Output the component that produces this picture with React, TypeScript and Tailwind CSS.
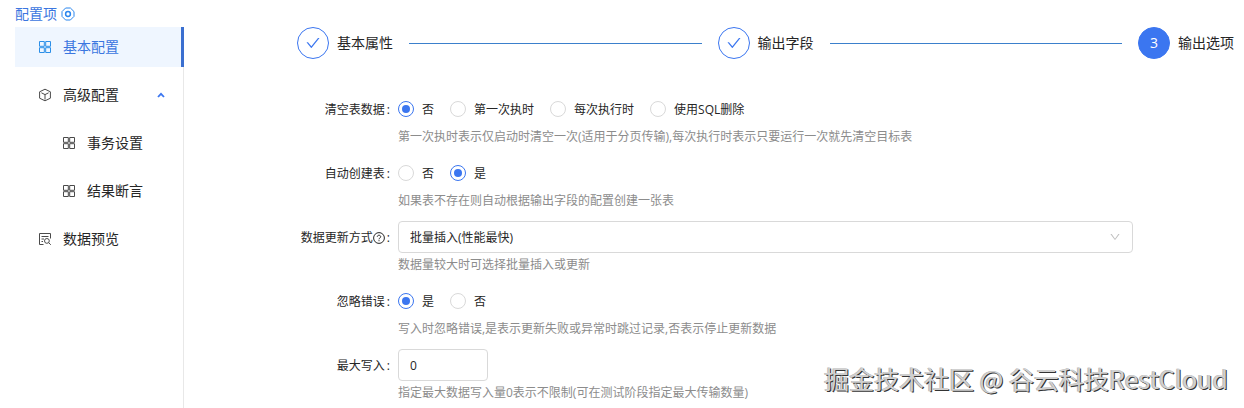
import React from 'react';
import { AiOutlineCheck, AiOutlineDown } from 'react-icons/ai';

const GridIcon: React.FC = () => (
  <svg className="size-3.5" viewBox="0 0 14 14" fill="none" stroke="currentColor">
    <path d="M1.5 1.5H6.3V6.3H1.5ZM7.7 1.5H12.5V6.3H7.7ZM1.5 7.7H6.3V12.5H1.5ZM7.7 7.7H12.5V12.5H7.7Z" />
  </svg>
);

const CubeIcon: React.FC = () => (
  <svg className="size-3.5" viewBox="0 0 14 14" fill="none" stroke="currentColor" strokeLinejoin="round">
    <path d="M7 1.2 12.4 3.8V10.2L7 12.8 1.6 10.2V3.8Z" />
    <path d="M3.4 4.8 7 6.6 10.6 4.8M7 6.6V11.6" />
  </svg>
);

const PreviewIcon: React.FC = () => (
  <svg className="size-3.5" viewBox="0 0 14 14" fill="none" stroke="currentColor">
    <path d="M5.5 12.5H1.5V1.5H12.5V6.5" />
    <path d="M3.5 4.5H10.5M3.5 7H6M3.5 9.5H5" />
    <circle cx="8.9" cy="8.9" r="2.4" />
    <path d="M10.6 10.6 12.8 12.8" />
  </svg>
);

const SettingIcon: React.FC = () => (
  <svg className="size-3.5" viewBox="0 0 14 14" fill="none" stroke="#2b86ee">
    <path d="M4.6 1H9.4L13 4.6V9.4L9.4 13H4.6L1 9.4V4.6Z" strokeLinejoin="round" />
    <circle cx="7" cy="7" r="2.4" strokeWidth="1.5" />
  </svg>
);

const HelpIcon: React.FC = () => (
  <svg className="size-3" viewBox="0 0 12 12" fill="none" stroke="currentColor">
    <circle cx="6" cy="6" r="5.4" />
    <path d="M4.3 4.8C4.3 2.7 7.7 2.7 7.7 4.8 7.7 6 6 5.9 6 7.3M6 8.2V9.2" />
  </svg>
);

interface MenuItemProps {
  icon: React.ReactNode;
  text: string;
  active?: boolean;
  nested?: boolean;
  open?: boolean;
}

const MenuItem: React.FC<MenuItemProps> = ({ icon, text, active, nested, open }) => (
  <button
    type="button"
    className={`-mr-px flex h-10 items-center gap-[11px] pr-[17px] text-sm ${nested ? 'pl-[47px]' : 'pl-[23px]'} ${
      active ? 'border-r-3 border-[#3a6fd0] bg-[#eff6ff] text-[#3b76e0]' : 'text-[#262626]'
    }`}
  >
    <span className={active ? 'text-[#2b8fe8]' : 'text-[#4a4a4a]'}>{icon}</span>
    <span>{text}</span>
    {open && (
      <svg className="ml-auto size-3" viewBox="0 0 12 12" fill="none" stroke="#3b76f0" strokeWidth="1.8">
        <path d="M3 8 6 4.8 9 8" />
      </svg>
    )}
  </button>
);

const steps = ['基本属性', '输出字段', '输出选项'];

const Steps: React.FC = () => (
  <ol className="flex items-center gap-4 pl-[113px] pr-2.5 text-sm text-[#262626]">
    {steps.map((title, i) => {
      const current = i === steps.length - 1;
      return (
        <React.Fragment key={title}>
          <li className="flex shrink-0 items-center gap-2">
            <span
              className={`flex size-8 items-center justify-center rounded-full border border-[#3b76f0] ${
                current ? 'bg-[#3b76f0] text-white' : 'text-[#3b76f0]'
              }`}
            >
              {current ? i + 1 : <AiOutlineCheck className="size-4" />}
            </span>
            {title}
          </li>
          {!current && <li aria-hidden="true" className="h-px flex-1 bg-[#3b80cc]" />}
        </React.Fragment>
      );
    })}
  </ol>
);

interface FieldProps {
  label: string;
  hint: string;
  htmlFor?: string;
  help?: boolean;
  children: React.ReactNode;
}

const Field: React.FC<FieldProps> = ({ label, hint, htmlFor, help, children }) => (
  <div className="mb-2 flex">
    <label
      htmlFor={htmlFor}
      id={htmlFor ? undefined : label}
      className="flex h-8 w-[214px] shrink-0 items-center justify-end pt-0.5 pr-2"
    >
      {label}
      {help && <HelpIcon />}
      <span className="ml-0.5">:</span>
    </label>
    <div className="flex-1">
      {children}
      <p className="leading-6 text-[#8c8c8c]">{hint}</p>
    </div>
  </div>
);

interface RadiosProps {
  name: string;
  options: string[];
  value: string;
}

const Radios: React.FC<RadiosProps> = ({ name, options, value }) => (
  <div role="radiogroup" aria-labelledby={name} className="flex h-8 items-center gap-4">
    {options.map((option) => (
      <label key={option} className="flex items-center gap-2">
        <input
          type="radio"
          name={name}
          defaultChecked={option === value}
          className="size-4 appearance-none rounded-full border border-[#d9d9d9] bg-white p-[3px] checked:border-[#3b76f0] checked:bg-[#3b76f0] checked:bg-clip-content"
        />
        <span className="pt-0.5">{option}</span>
      </label>
    ))}
  </div>
);

const App: React.FC = () => {
  return (
    <div className="relative bg-white font-['Open_Sans','Noto_Sans_CJK_SC',sans-serif] text-xs text-[#262626]">
      <div className="flex h-[27px] items-center gap-1 pl-[15px] text-sm text-[#3b76e0]">
        配置项
        <SettingIcon />
      </div>

      <div className="flex">
        <nav className="ml-[15px] flex min-h-[calc(100vh-27px)] w-[169px] shrink-0 flex-col gap-2 border-r border-[#e8e8e8]">
          <MenuItem icon={<GridIcon />} text="基本配置" active />
          <MenuItem icon={<CubeIcon />} text="高级配置" open />
          <MenuItem icon={<GridIcon />} text="事务设置" nested />
          <MenuItem icon={<GridIcon />} text="结果断言" nested />
          <MenuItem icon={<PreviewIcon />} text="数据预览" />
        </nav>

        <main className="flex-1">
          <Steps />

          <form className="pr-[111px] pt-[34px]">
            <Field
              label="清空表数据"
              hint="第一次执时表示仅启动时清空一次(适用于分页传输),每次执行时表示只要运行一次就先清空目标表"
            >
              <Radios name="清空表数据" options={['否', '第一次执时', '每次执行时', '使用SQL删除']} value="否" />
            </Field>
            <Field label="自动创建表" hint="如果表不存在则自动根据输出字段的配置创建一张表">
              <Radios name="自动创建表" options={['否', '是']} value="是" />
            </Field>
            <Field label="数据更新方式" hint="数据量较大时可选择批量插入或更新" htmlFor="mode" help>
              <div className="relative">
                <select
                  id="mode"
                  className="block h-8 w-full appearance-none rounded border border-[#d9d9d9] bg-white px-[11px] pt-0.5"
                >
                  <option>批量插入(性能最快)</option>
                </select>
                <AiOutlineDown className="pointer-events-none absolute right-3 top-2.5 size-3 text-[#bfbfbf]" />
              </div>
            </Field>
            <Field label="忽略错误" hint="写入时忽略错误,是表示更新失败或异常时跳过记录,否表示停止更新数据">
              <Radios name="忽略错误" options={['是', '否']} value="是" />
            </Field>
            <Field label="最大写入" hint="指定最大数据写入量0表示不限制(可在测试阶段指定最大传输数量)" htmlFor="max">
              <input
                id="max"
                type="text"
                defaultValue="0"
                className="block h-8 w-[90px] rounded border border-[#d9d9d9] bg-white px-[11px]"
              />
            </Field>
          </form>
        </main>
      </div>

      <div className="absolute right-4 bottom-[17px] font-['Noto_Sans_CJK_SC',sans-serif] text-[25px] leading-9 text-[#d0d0d0] [text-shadow:1px_1px_0_#333,-1px_0_0_#b8b8b8]">
        掘金技术社区 @ 谷云科技RestCloud
      </div>
    </div>
  );
};

export default App;
